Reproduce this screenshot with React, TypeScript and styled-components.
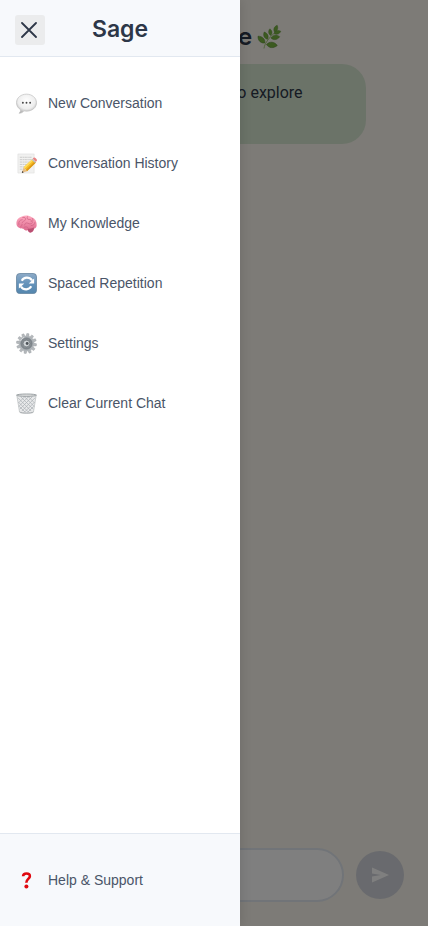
import React from "react";
import styled, { createGlobalStyle } from "styled-components";

const GlobalStyle = createGlobalStyle`
  * { box-sizing: border-box; }
  body { margin: 0; }
  button, input { font: inherit; }
`;

const Page = styled.div`
  position: relative;
  min-height: 100vh;
  overflow: hidden;
  font-family: Inter, sans-serif;
  color: #2d3748;
`;

const Chat = styled.main`
  min-height: 100vh;
  display: flex;
  flex-direction: column;
  background: #faf7ee;
`;

const ChatHeader = styled.header`
  display: flex;
  align-items: center;
  justify-content: center;
  gap: 4px;
  padding: 18px 0 8px 48px;
  height: 64px;
`;

const ChatTitle = styled.h1`
  margin: 0;
  font-size: 24px;
  line-height: 32px;
  font-weight: 600;
`;

const Messages = styled.section`
  flex: 1;
  padding: 0 24px;
`;

const Bubble = styled.p`
  margin: 0;
  width: 90%;
  padding: 17px 18px 15px;
  border-radius: 24px;
  background: #d7e6d1;
  font-family: Roboto, sans-serif;
  font-size: 16px;
  line-height: 24px;
`;

const Composer = styled.form`
  display: flex;
  align-items: center;
  gap: 12px;
  padding: 24px;
`;

const MessageInput = styled.input`
  flex: 1;
  min-width: 0;
  height: 54px;
  padding: 0 24px;
  border: 2px solid #e2e8f0;
  border-radius: 27px;
  background: #fff;
`;

const SendButton = styled.button`
  display: grid;
  place-items: center;
  width: 48px;
  height: 48px;
  padding: 0;
  border: 0;
  border-radius: 50%;
  background: #d3d5dc;
`;

const Overlay = styled.div`
  position: absolute;
  inset: 0;
  background: rgba(0, 0, 0, 0.5);
`;

const Drawer = styled.aside`
  position: absolute;
  top: 0;
  bottom: 0;
  left: 0;
  width: 240px;
  display: flex;
  flex-direction: column;
  background: #fff;
  box-shadow: 2px 0 10px rgba(0, 0, 0, 0.1);
`;

const DrawerHeader = styled.header`
  display: grid;
  grid-template-columns: 30px 1fr 30px;
  align-items: center;
  height: 57px;
  padding: 3px 15px 0;
  background: #f7f9fc;
  border-bottom: 1px solid #e2e8f0;
`;

const CloseButton = styled.button`
  display: grid;
  place-items: center;
  width: 30px;
  height: 30px;
  padding: 0;
  border: 0;
  border-radius: 3px;
  background: #ebeced;
`;

const DrawerTitle = styled.h2`
  margin: 0;
  padding-bottom: 2px;
  text-align: center;
  font-size: 23px;
  line-height: 28px;
  font-weight: 600;
`;

const Menu = styled.nav`
  flex: 1;
  padding: 16px 0;
`;

const DrawerFooter = styled.footer`
  padding: 16px 0;
  background: #f7f9fc;
  border-top: 1px solid #e2e8f0;
`;

const MenuItem = styled.button`
  display: flex;
  align-items: center;
  gap: 11px;
  width: 100%;
  height: 60px;
  padding: 0 16px;
  border: 0;
  background: transparent;
  color: #4a5568;
  font-family: "Liberation Sans", Arial, sans-serif;
  font-size: 14px;
  line-height: 20px;
  text-align: left;
`;

const Icon = styled.svg`
  flex: none;
  width: 21px;
  height: 21px;
`;

const SpeechIcon = () => (
  <Icon viewBox="0 0 22 22" aria-hidden="true">
    <defs>
      <radialGradient id="speech" cx=".5" cy=".35" r=".65">
        <stop offset="0" stopColor="#fff" /><stop offset=".65" stopColor="#eee" /><stop offset="1" stopColor="#b0b0b0" />
      </radialGradient>
    </defs>
    <path d="M11 1.200c5.700 0 10.500 3.900 10.500 9s-4.600 8.800-10.500 8.800c-1 0-1.800-.1-2.600-.3C7.200 20.200 5.400 21.200 3.200 21.200c1.300-1 1.800-2.300 1.500-3.800C2 15.700.5 13.200.5 10.200c0-5.100 4.600-9 10.500-9z" fill="url(#speech)" stroke="#bdbdbd" strokeWidth=".7" />
    <g fill="#444"><circle cx="7.200" cy="10.200" r="1" /><circle cx="11" cy="10.200" r="1" /><circle cx="14.800" cy="10.200" r="1" /></g>
  </Icon>
);

const MemoIcon = () => (
  <Icon viewBox="0 0 22 22" aria-hidden="true">
    <path d="M2 1h17v20H2z" fill="#f1f1f0" stroke="#dededc" strokeWidth=".6" />
    <path d="M4 4.500h12.500M4 7h12.500M4 9.500h10M4 12h8M4 14.500h5M4 17h4" stroke="#c6c6c6" strokeWidth=".9" strokeDasharray="2.500 .5 1.500 .4" />
    <path d="m8 15 9-8.500 3.900 3.500-9.400 9z" fill="#f8be24" />
    <path d="m8 15 9-8.500 1.300 1.100-9.200 8.800z" fill="#ffdc5c" />
    <path d="m10.300 17.900 9.200-9 1.400 1.100-9.400 9z" fill="#dc9818" />
    <path d="m17.500 6 1-1c1.200-.9 4.200 2 3.300 3.100l-1 1.400z" fill="#e98282" />
    <path d="m16.500 7 .9-.9 3.500 3.500-.9.900z" fill="#b9c2c5" />
    <path d="m8 15 3.500 4-5.500 2z" fill="#e6bd85" /><path d="m6.700 18.900 1.400 1.300-2.100.8z" fill="#333" />
  </Icon>
);

const BrainIcon = () => (
  <Icon viewBox="0 0 22 22" aria-hidden="true">
    <defs><linearGradient id="brain" x2="0" y2="1"><stop stopColor="#ffabc0" /><stop offset="1" stopColor="#d96288" /></linearGradient></defs>
    <path d="M.5 11.500C.2 7.500 2.700 4.500 6.200 3.700c3-1.500 7.500-1.300 10.300.8 3.200 1 5.300 4.300 5.100 7.500.4 2.300-.8 4-2.800 4.600-.6 2.400-2 3.900-4 3.800-1.200 0-2.100-1.200-2.400-2.200-2.200.3-3.800-.3-4.600-1.800C4.500 16.500.7 15 .5 11.500z" fill="url(#brain)" />
    <path d="M12.300 16.300c2.700.5 4.700.1 6.500-1 .3 3.500-2 5.500-4.300 5-1.300-.3-2.500-2.100-2.200-4z" fill="#b95072" />
    <path d="M3 12c-.5-3 .8-4.800 3.500-5M5 14c1-.2 1.600-1 1.300-2.300M7 4.700C9.500 4 10.500 5.500 9.800 7.200 9 9 6.800 8.200 6.500 10M12 3.800c-1 2 0 3.200 1.800 3 2-.2 2.600.8 2.200 2.300M17 5.500c1 1.300 1 2.400.3 3.300M9 12.500c.3-2 2-2.700 3.600-1.700 1.500 1 3.600.8 4.700-.7M8.500 15c1.600-.8 2.700-.7 4 .3M19.800 10c-.2 2-1.600 3.300-3.900 3.200" fill="none" stroke="#cc6083" strokeWidth=".7" strokeLinecap="round" />
  </Icon>
);

const RepeatIcon = () => (
  <Icon viewBox="0 0 22 22" aria-hidden="true">
    <defs><linearGradient id="repeat" x2="0" y2="1"><stop stopColor="#8eabc7" /><stop offset=".5" stopColor="#6593bb" /><stop offset="1" stopColor="#5486ad" /></linearGradient></defs>
    <rect x=".5" y=".5" width="21" height="21" rx="3.500" fill="url(#repeat)" stroke="#61819d" strokeWidth=".8" />
    <path d="M6 8c2.200-4 8-4.300 10.800-.2M16 14c-2.200 4-8 4.300-10.800.2" stroke="#fff" strokeWidth="2.200" fill="none" />
    <path d="M19 5.800V11h-5.700zM3 16.200V11h5.700z" fill="#fff" />
  </Icon>
);

const GearIcon = () => (
  <Icon viewBox="0 0 22 22" aria-hidden="true">
    <g fill="#b5b9bc" stroke="#979ca0" strokeWidth=".4">
      {Array.from({ length: 12 }, (_, i) => <path key={i} d="M9.200 5 9.900.5h2.200l.7 4.500z" transform={`rotate(${i * 30 + 8} 11 11)`} />)}
    </g>
    <circle cx="11" cy="11" r="8" fill="#aeb3b7" />
    <circle cx="11" cy="11" r="5.800" fill="#858c91" stroke="#767e84" strokeWidth="1" />
    <circle cx="11" cy="11" r="3.500" fill="#cfd4d7" stroke="#62696f" strokeWidth=".6" />
    <circle cx="11.700" cy="11" r="1.500" fill="#4c5257" />
    <path d="M4.700 8.500c.8-2 2-3.200 4-4" fill="none" stroke="#dfe2e4" strokeWidth=".9" />
  </Icon>
);

const TrashIcon = () => (
  <Icon viewBox="0 0 22 22" aria-hidden="true">
    <path d="M.8 2 3.700 20c.4 1.700 14.200 1.700 14.600 0l2.900-18z" fill="#e9eaeb" stroke="#b6babc" strokeWidth=".7" />
    <path d="M2 5l14 14M5 4l13 13M9 4l10 10M13 4l6.500 6.500M3 10l10 10M3.500 14l6 6M20 5 6 19M17 4 4 17M13 4 3 14M9 4 2.500 10.500M19 10 9 20M18.500 14l-6 6" stroke="#aeb3b7" strokeWidth=".8" />
    <ellipse cx="11" cy="2.300" rx="10.300" ry="1.300" fill="#d8dada" stroke="#949a9e" strokeWidth=".9" />
    <path d="M4 20c2 1.300 12 1.300 14 0" fill="none" stroke="#a9adb0" />
  </Icon>
);

const QuestionIcon = () => (
  <Icon viewBox="0 0 22 22" aria-hidden="true">
    <path d="M7.400 6.500C7.500 4.500 8.800 3.600 11 3.600c2.500 0 3.800 1.200 3.500 3.200-.4 2.500-3.700 3-3.700 6.500" fill="none" stroke="#e00910" strokeWidth="2.700" />
    <circle cx="10.900" cy="17.400" r="2.100" fill="#e00910" />
  </Icon>
);

const Herb = styled.svg`
  width: 26px;
  height: 26px;
`;

const leaf = "M0 0C-2.600-2-2.800-5.500 0-8 2.600-5.500 2.600-2 0 0z";

const HerbIcon = () => (
  <Herb viewBox="0 0 26 26" aria-hidden="true">
    <path d="M8 24.500c.5-4.500 4-10 12-17" fill="none" stroke="#a5c978" strokeWidth="1" />
    <g fill="#79b540" stroke="#4f8529" strokeWidth=".4">
      <path d={leaf} transform="translate(18.500 8) rotate(22) scale(.9)" />
      <path d={leaf} transform="translate(14.800 11.500) rotate(-8) scale(.85)" />
      <path d={leaf} transform="translate(18 9.500) rotate(72) scale(.9)" />
      <path d={leaf} transform="translate(11.500 15.300) rotate(-24)" />
      <path d={leaf} transform="translate(15 14) rotate(82) scale(1.100)" />
      <path d={leaf} transform="translate(8.800 19) rotate(-45) scale(1.200)" />
      <path d={leaf} transform="translate(10.500 20.500) rotate(95) scale(1.350)" />
    </g>
  </Herb>
);

const items = [
  { label: "New Conversation", Glyph: SpeechIcon },
  { label: "Conversation History", Glyph: MemoIcon },
  { label: "My Knowledge", Glyph: BrainIcon },
  { label: "Spaced Repetition", Glyph: RepeatIcon },
  { label: "Settings", Glyph: GearIcon },
  { label: "Clear Current Chat", Glyph: TrashIcon },
];

export default function App() {
  return (
    <Page>
      <GlobalStyle />
      <Chat>
        <ChatHeader>
          <ChatTitle>Sage</ChatTitle>
          <HerbIcon />
        </ChatHeader>
        <Messages>
          <Bubble>Hello! What would you like to explore<br />today?</Bubble>
        </Messages>
        <Composer>
          <MessageInput aria-label="Message" />
          <SendButton type="button" aria-label="Send">
            <svg width="20" height="18" viewBox="0 0 20 18" aria-hidden="true"><path d="M2 1.500v6l9 1.500-9 1.500v6L19 9z" fill="#fff" /></svg>
          </SendButton>
        </Composer>
      </Chat>
      <Overlay />
      <Drawer>
        <DrawerHeader>
          <CloseButton type="button" aria-label="Close menu">
            <svg width="18" height="18" viewBox="0 0 18 18" aria-hidden="true"><path d="m1 2 14 14M15 2 1 16" stroke="#2d3748" strokeWidth="1.800" strokeLinecap="round" /></svg>
          </CloseButton>
          <DrawerTitle>Sage</DrawerTitle>
        </DrawerHeader>
        <Menu>
          {items.map(({ label, Glyph }) => (
            <MenuItem key={label} type="button"><Glyph />{label}</MenuItem>
          ))}
        </Menu>
        <DrawerFooter>
          <MenuItem type="button"><QuestionIcon />Help &amp; Support</MenuItem>
        </DrawerFooter>
      </Drawer>
    </Page>
  );
}
